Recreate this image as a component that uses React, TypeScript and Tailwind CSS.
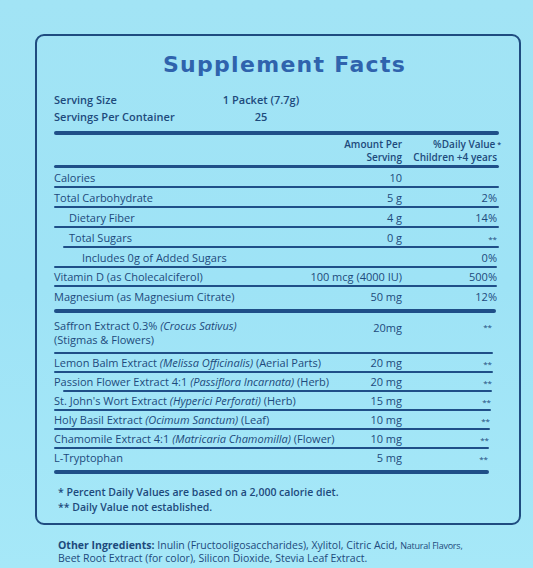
import React from "react";

const body = { fontFamily: '"Open Sans", "Liberation Sans", sans-serif' };

type RowProps = {
  label: React.ReactNode;
  amount?: string;
  dv?: string;
  indent?: string;
  lineInset?: boolean;
  lineRight?: string;
  dvPad?: string;
  noLine?: boolean;
  cols?: string;
};

const Line = ({ inset, right = "mr-0" }: { inset?: boolean; right?: string }) => (
  <div className={`h-[2px] rounded-full bg-[#1f4f88] ${inset ? "ml-[9px]" : "ml-0"} ${right}`} />
);

const Thick = ({ right = "mr-0" }: { right?: string }) => (
  <div className={`h-[4px] rounded-full bg-[#1f4f88] ${right}`} />
);

const Row = ({
  label,
  amount,
  dv,
  indent = "pl-0",
  lineInset,
  lineRight,
  dvPad = "pr-[2px]",
  noLine,
  cols = "grid-cols-[minmax(0,1fr)_110px_97px]",
}: RowProps) => (
  <div>
    <div className={`grid h-[18px] ${cols} items-center text-[11px] font-medium leading-none`}>
      <div className={`${indent} whitespace-nowrap`}>{label}</div>
      <div className="whitespace-nowrap text-right">{amount}</div>
      <div className={`text-right ${dvPad}`}>
        {dv === "**" ? <span className="text-[8px]">**</span> : dv}
      </div>
    </div>
    {!noLine && <Line inset={lineInset} right={lineRight} />}
  </div>
);

const Herb = ({ name, latin, part }: { name: string; latin: string; part: string }) => (
  <span>
    {name} <i>{latin}</i> {part}
  </span>
);

const herbCols = "grid-cols-[minmax(0,1fr)_110px_92px]";

export default function App() {
  return (
    <div
      className="min-h-[568px] w-[533px] overflow-hidden bg-gradient-to-b from-[#a2e4f5] via-[#9ee3f6] to-[#a6e8f8] pt-[34px] text-[#1d4a7c]"
      style={body}
    >
      <div className="ml-[35px] h-[491px] w-[486px] rounded-[9px] border-2 border-[#1f4c80] pl-[17px] pr-[20px] pt-[16px]">
        <h1
          className="pl-[16px] text-center text-[22px] font-bold leading-[26px] tracking-[1.3px] text-[#2f63ad]"
          style={{ fontFamily: '"DejaVu Sans", Verdana, sans-serif' }}
        >
          Supplement Facts
        </h1>

        <div className="mt-[13px] text-[11px] font-semibold leading-[17px]">
          <div className="flex whitespace-nowrap">
            <span className="w-[162px]">Serving Size</span>
            <span className="w-[90px] text-center">1 Packet (7.7g)</span>
          </div>
          <div className="flex whitespace-nowrap">
            <span className="w-[162px]">Servings Per Container</span>
            <span className="w-[90px] text-center">25</span>
          </div>
        </div>

        <div className="mt-[6px]">
          <Thick />
        </div>

        <div className="grid h-[30px] grid-cols-[minmax(0,1fr)_110px_97px] items-end pb-[1px] text-[10px] font-semibold leading-[13px]">
          <div />
          <div className="whitespace-nowrap text-right">
            <div>Amount Per</div>
            <div>Serving</div>
          </div>
          <div className="whitespace-nowrap text-right">
            <div className="-mr-[2px]">
              %Daily Value<span className="align-top text-[7px]"> *</span>
            </div>
            <div className="pr-[2px]">Children +4 years</div>
          </div>
        </div>
        <div className="h-[3px] rounded-full bg-[#1f4f88]" />

        <Row label="Calories" amount="10" />
        <Row label="Total Carbohydrate" amount="5 g" dv="2%" />
        <Row label="Dietary Fiber" amount="4 g" dv="14%" indent="pl-[15px]" />
        <Row label="Total Sugars" amount="0 g" dv="**" indent="pl-[15px]" lineInset />
        <Row label="Includes 0g of Added Sugars" dv="0%" indent="pl-[28px]" lineRight="mr-[2px]" />
        <div className="-mt-[1px]">
          <Row label="Vitamin D (as Cholecalciferol)" amount="100 mcg (4000 IU)" dv="500%" lineRight="mr-[2px]" />
        </div>
        <Row label="Magnesium  (as Magnesium Citrate)" amount="50 mg" dv="12%" noLine />
        <div className="mt-[4px]">
          <Thick right="mr-[3px]" />
        </div>

        <div className="mr-[5px]">
          <div className={`grid ${herbCols} pt-[6px] pb-[5px] text-[11px] font-medium leading-[14px]`}>
            <div>
              Saffron Extract 0.3% <i>(Crocus Sativus)</i>
              <br />
              (Stigmas &amp; Flowers)
            </div>
            <div className="pt-[2px] text-right">20mg</div>
            <div className="pr-[2px] pt-[1px] text-right text-[8px]">**</div>
          </div>
          <Line right="mr-[1px]" />
          <div className="-mt-[1px]">
            <Row
              cols={herbCols}
              label={<Herb name="Lemon Balm Extract" latin="(Melissa Officinalis)" part="(Aerial Parts)" />}
              amount="20 mg"
              dv="**"
              dvPad="pr-[2px]"
              lineRight="mr-[1px]"
            />
          </div>
          <div className="-mt-[1px]">
            <Row
              cols={herbCols}
              label={<Herb name="Passion Flower Extract 4:1" latin="(Passiflora Incarnata)" part="(Herb)" />}
              amount="20 mg"
              dv="**"
              dvPad="pr-[2px]"
              lineInset
              lineRight="mr-[2px]"
            />
          </div>
          <div className="-mt-[1px]">
            <Row
              cols={herbCols}
              label={<Herb name="St. John's Wort Extract " latin="(Hyperici Perforati)" part="(Herb)" />}
              amount="15 mg"
              dv="**"
              dvPad="pr-[3px]"
              lineRight="mr-[3px]"
            />
          </div>
          <div className="-mt-[1px]">
            <Row
              cols={herbCols}
              label={<Herb name="Holy Basil Extract " latin="(Ocimum Sanctum)" part="(Leaf)" />}
              amount="10 mg"
              dv="**"
              dvPad="pr-[4px]"
              lineRight="mr-[4px]"
            />
          </div>
          <div className="-mt-[1px]">
            <Row
              cols={herbCols}
              label={<Herb name="Chamomile Extract 4:1" latin="(Matricaria Chamomilla)" part="(Flower)" />}
              amount="10 mg"
              dv="**"
              dvPad="pr-[5px]"
              lineRight="mr-[5px]"
            />
          </div>
          <div className="-mt-[1px]">
            <Row cols={herbCols} label="L-Tryptophan" amount="5 mg" dv="**" dvPad="pr-[6px]" noLine />
          </div>
          <div className="mt-[4px]">
            <Thick right="mr-[5px]" />
          </div>
        </div>

        <div className="mt-[11px] pl-[4px] text-[10.5px] font-semibold leading-[15px]">
          <p>* Percent Daily Values are based on a 2,000 calorie diet.</p>
          <p>** Daily Value not established.</p>
        </div>
      </div>

      <div className="ml-[58px] mt-[14px] text-[10.5px] font-medium leading-[13px]">
        <p className="whitespace-nowrap">
          <b className="font-bold">Other Ingredients:</b> Inulin (Fructooligosaccharides), Xylitol, Citric Acid,{" "}
          <span className="text-[9px] tracking-tight">Natural Flavors,</span>
        </p>
        <p>Beet Root Extract (for color), Silicon Dioxide, Stevia Leaf Extract.</p>
      </div>
    </div>
  );
}
